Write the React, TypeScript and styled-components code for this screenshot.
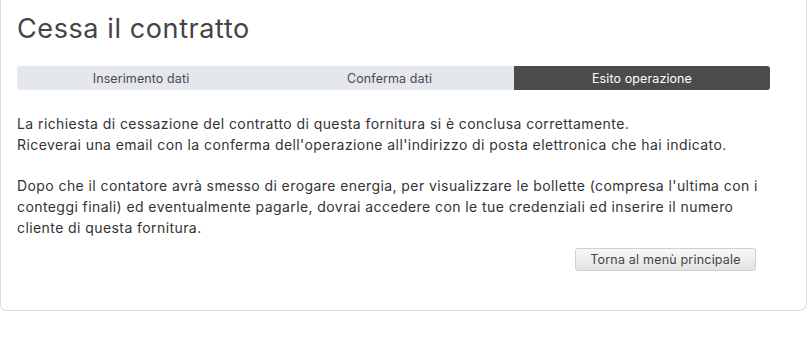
import React from 'react'
import styled, { createGlobalStyle } from 'styled-components'

const GlobalStyle = createGlobalStyle`
  html, body {
    margin: 0;
    padding: 0;
    background: #ffffff;
  }
  body {
    font-family: Inter, "Noto Sans", sans-serif;
    color: #333;
  }
`

//-----------------------------------------------------------------------------------------------
// styled parts
//-----------------------------------------------------------------------------------------------
const Card = styled.div`
  box-sizing: border-box;
  width: 807px;
  height: 311px;
  border: 1px solid #dcdcdc;
  border-top: none;
  border-radius: 0 0 8px 6px;
  padding: 12px 36px 0 16px;
  background: #fff;
`

const Title = styled.h1`
  margin: 0;
  font-size: 27px;
  font-weight: 400;
  color: #444;
  line-height: 34px;
  letter-spacing: 0.6px;
`

const Steps = styled.div`
  display: grid;
  grid-template-columns: 248px 249px 1fr;
  height: 24px;
  margin-top: 20px;
  border-radius: 3px;
  overflow: hidden;
  background: #e4e8ec;
`

const Step = styled.div<{ $active?: boolean }>`
  display: flex;
  align-items: center;
  justify-content: center;
  font-size: 12.5px;
  letter-spacing: 0.1px;
  color: ${(p) => (p.$active ? '#fff' : '#4a4a4a')};
  background: ${(p) => (p.$active ? '#4b4b4b' : 'transparent')};
`

const Body = styled.div`
  margin-top: 23px;
  width: 790px;
  font-size: 14px;
  letter-spacing: 0.42px;
  line-height: 21px;
  color: #333;
`

const Para = styled.p`
  margin: 0 0 20px 0;
  white-space: nowrap;
`

const Actions = styled.div`
  display: flex;
  justify-content: flex-end;
  width: 739px;
  margin-top: -10px;
`

const Button = styled.button`
  height: 23px;
  width: 181px;
  padding: 0;
  font-family: inherit;
  font-size: 12.5px;
  letter-spacing: 0.2px;
  color: #444;
  border: 1px solid #d0d0d0;
  border-radius: 3px;
  background: linear-gradient(#f9f9f9, #e2e2e2);
  cursor: pointer;
`

//-----------------------------------------------------------------------------------------------
// App
//-----------------------------------------------------------------------------------------------
const App: React.FunctionComponent = () => {
  return (
    <>
      <GlobalStyle />
      <Card>
        <Title>Cessa il contratto</Title>
        <Steps>
          <Step>Inserimento dati</Step>
          <Step>Conferma dati</Step>
          <Step $active>Esito operazione</Step>
        </Steps>
        <Body>
          <Para>
            La richiesta di cessazione del contratto di questa fornitura si è conclusa correttamente.
            <br />
            Riceverai una email con la conferma dell'operazione all'indirizzo di posta elettronica che hai indicato.
          </Para>
          <Para>
            Dopo che il contatore avrà smesso di erogare energia, per visualizzare le bollette (compresa l'ultima con i
            <br />
            conteggi finali) ed eventualmente pagarle, dovrai accedere con le tue credenziali ed inserire il numero
            <br />
            cliente di questa fornitura.
          </Para>
        </Body>
        <Actions>
          <Button>Torna al menù principale</Button>
        </Actions>
      </Card>
    </>
  )
}

export default App
